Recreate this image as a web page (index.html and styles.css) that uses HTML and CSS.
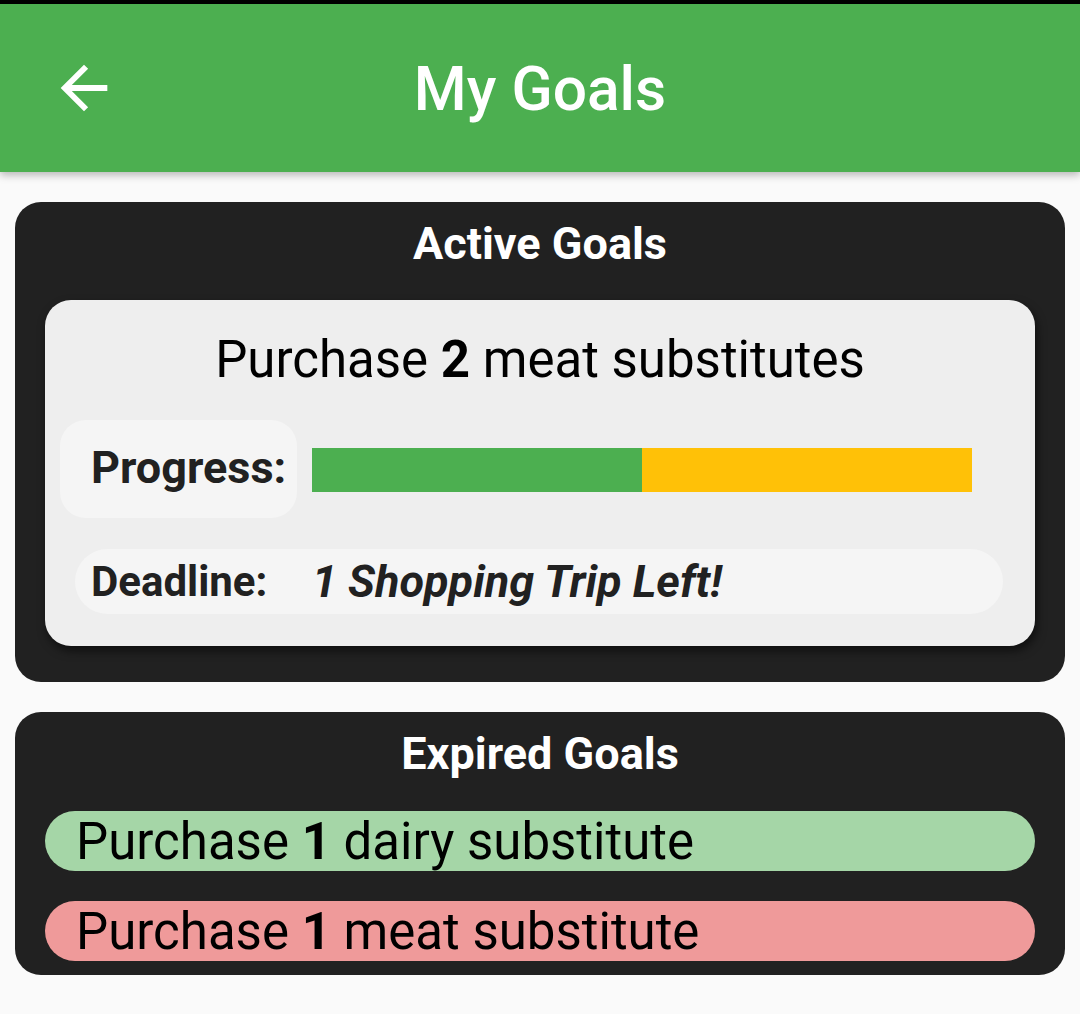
FILE: index.html
```html
<!DOCTYPE html>
<html lang="en">
<head>
<meta charset="utf-8">
<title>My Goals</title>
<link rel="stylesheet" href="styles.css">
</head>
<body>
<div class="status"></div>
<header class="appbar">
  <button class="back" aria-label="Back">
    <svg viewBox="0 0 24 24" width="70" height="70"><path fill="#fff" d="M20 11H7.83l5.59-5.59L12 4l-8 8 8 8 1.41-1.41L7.83 13H20v-2z"/></svg>
  </button>
  <h1 class="appbar-title">My Goals</h1>
  <span></span>
</header>
<main class="content">
  <section class="panel panel-active">
    <h2 class="panel-title">Active Goals</h2>
    <div class="goal-card">
      <p class="goal-name">Purchase <b>2</b> meat substitutes</p>
      <div class="progress-row">
        <div class="progress-label">Progress:</div>
        <div class="bar"><div class="bar-fill" style="width:50%"></div></div>
      </div>
      <div class="deadline-row">
        <span class="deadline-label">Deadline:</span>
        <span class="deadline-value">1 Shopping Trip Left!</span>
      </div>
    </div>
  </section>
  <section class="panel panel-expired">
    <h2 class="panel-title">Expired Goals</h2>
    <div class="expired-list">
      <div class="expired-item success">Purchase <b>1</b> dairy substitute</div>
      <div class="expired-item failed">Purchase <b>1</b> meat substitute</div>
    </div>
  </section>
</main>
</body>
</html>
```
FILE: styles.css
```css
* { box-sizing: border-box; }
html, body { margin: 0; padding: 0; }
body {
  background: #fafafa;
  font-family: Roboto, "Noto Sans", sans-serif;
  color: #000;
  width: 1080px;
  height: 1014px;
  overflow: hidden;
}
.status { height: 4px; background: #000; }
.appbar {
  height: 168px;
  background: #4caf50;
  display: grid;
  grid-template-columns: 1fr auto 1fr;
  align-items: center;
  box-shadow: 0 3px 8px rgba(0,0,0,0.28);
  position: relative;
  z-index: 1;
}
.back {
  background: none;
  border: 0;
  padding: 0;
  margin-left: 49px;
  width: 70px;
  height: 70px;
  display: flex;
  justify-self: start;
}
.appbar-title {
  margin: 0;
  padding-top: 4px;
  color: #fff;
  font-size: 60.5px;
  font-weight: 500;
  line-height: 1;
}
.content {
  padding: 30px 15px;
  display: flex;
  flex-direction: column;
  gap: 30px;
}
.panel {
  background: #212121;
  border-radius: 26px;
}
.panel-active { padding: 14px 30px 36px; }
.panel-expired { padding: 14px 30px 14px; }
.panel-title {
  margin: 0;
  color: #fff;
  text-align: center;
  font-size: 45px;
  font-weight: 700;
  line-height: 55px;
}
.goal-card {
  margin-top: 29px;
  background: #eeeeee;
  border-radius: 26px;
  box-shadow: 2px 5px 10px rgba(0,0,0,0.55);
  padding: 30px 32px 32px 15px;
}
.goal-name {
  margin: 0;
  text-align: center;
  font-size: 51px;
  line-height: 60px;
  padding-left: 17px;
}
.goal-name b { font-weight: 700; }
.progress-row {
  margin-top: 30px;
  display: flex;
  align-items: center;
  gap: 15px;
}
.progress-label {
  width: 237px;
  height: 98px;
  background: #f5f5f5;
  border-radius: 26px;
  padding-left: 31px;
  padding-bottom: 4px;
  display: flex;
  align-items: center;
  font-size: 45px;
  font-weight: 700;
  color: #212121;
}
.bar {
  width: 660px;
  height: 44px;
  margin-top: 1px;
  background: #ffc107;
}
.bar-fill { height: 100%; background: #4caf50; }
.deadline-row {
  margin-top: 31px;
  margin-left: 15px;
  height: 65px;
  background: #f5f5f5;
  border-radius: 33px;
  display: flex;
  align-items: center;
  padding-left: 16px;
  color: #212121;
  font-size: 42px;
  font-weight: 700;
}
.deadline-label { width: 221px; }
.deadline-value { font-style: italic; font-size: 45px; }
.expired-list {
  margin-top: 30px;
  display: flex;
  flex-direction: column;
  gap: 30px;
}
.expired-item {
  height: 60px;
  border-radius: 30px;
  padding-left: 31px;
  display: flex;
  align-items: center;
  font-size: 51px;
  color: #000;
  white-space: pre;
}
.expired-item b { font-weight: 700; }
.success { background: #a5d6a7; }
.failed { background: #ef9a9a; }
```
